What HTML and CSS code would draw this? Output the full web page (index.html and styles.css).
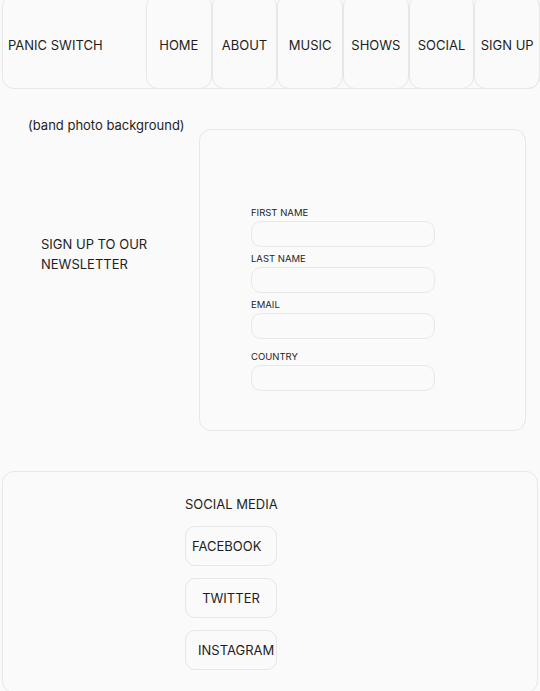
FILE: index.html
```html
<!DOCTYPE html>
<html>
<head>
<meta charset="utf-8">
<link rel="stylesheet" href="styles.css">
</head>
<body>
<div class="page">
  <header class="header">
    <div class="brand">PANIC SWITCH</div>
    <nav class="nav">
      <a class="nav-item">HOME</a>
      <a class="nav-item">ABOUT</a>
      <a class="nav-item">MUSIC</a>
      <a class="nav-item">SHOWS</a>
      <a class="nav-item">SOCIAL</a>
      <a class="nav-item">SIGN UP</a>
    </nav>
  </header>
  <section class="hero">
    <div class="hero-left">
      <div class="caption">(band photo background)</div>
      <div class="newsletter">SIGN UP TO OUR<br>NEWSLETTER</div>
    </div>
    <form class="card">
      <label class="field">
        <span class="label">FIRST NAME</span>
        <span class="input"></span>
      </label>
      <label class="field">
        <span class="label">LAST NAME</span>
        <span class="input"></span>
      </label>
      <label class="field">
        <span class="label">EMAIL</span>
        <span class="input"></span>
      </label>
      <label class="field field-gap">
        <span class="label">COUNTRY</span>
        <span class="input"></span>
      </label>
    </form>
  </section>
  <footer class="footer">
    <div class="social">
      <div class="social-title">SOCIAL MEDIA</div>
      <a class="social-btn social-fb">FACEBOOK</a>
      <a class="social-btn social-tw">TWITTER</a>
      <a class="social-btn social-ig">INSTAGRAM</a>
    </div>
  </footer>
</div>
</body>
</html>
```
FILE: styles.css
```css
* { box-sizing: border-box; }
html, body {
  margin: 0;
  background: #fafafa;
}
body {
  font-family: Inter, "Noto Sans", sans-serif;
  font-size: 13px;
  color: #1e1e1e;
  overflow: hidden;
}
.page {
  padding-left: 2px;
}
.header {
  display: flex;
  height: 95px;
  margin-top: -6px;
  border: 1px solid #e7e7e7;
  border-radius: 12px;
}
.brand {
  width: 143px;
  display: flex;
  align-items: center;
  padding-left: 5px;
  padding-top: 6px;
}
.nav {
  display: flex;
  flex: 1;
  margin: -1px -1px -1px 0;
}
.nav-item {
  flex: 1;
  border: 1px solid #e7e7e7;
  border-radius: 12px;
  display: flex;
  align-items: center;
  justify-content: center;
  padding-top: 6px;
  white-space: nowrap;
}
.hero {
  display: flex;
  align-items: flex-start;
  height: 382px;
  padding: 28px 14px 0 26px;
}
.hero-left {
  width: 171px;
}
.caption {
  line-height: 17px;
}
.newsletter {
  margin-top: 100px;
  padding-left: 13px;
  line-height: 20px;
}
.card {
  flex: 1;
  margin: 12px 0 0 0;
  height: 302px;
  border: 1px solid #e7e7e7;
  border-radius: 12px;
  padding: 77px 0 0 51px;
  display: flex;
  flex-direction: column;
}
.field {
  display: flex;
  flex-direction: column;
  margin-bottom: 6px;
}
.field-gap {
  margin-top: 6px;
}
.label {
  font-size: 9.5px;
  line-height: 12px;
  margin-bottom: 2px;
}
.input {
  width: 184px;
  height: 26px;
  border: 1px solid #e7e7e7;
  border-radius: 10px;
}
.footer {
  width: 536px;
  height: 222px;
  border: 1px solid #e7e7e7;
  border-radius: 12px;
  padding: 24px 0 0 182px;
}
.social {
  width: 92px;
  display: flex;
  flex-direction: column;
}
.social-title {
  line-height: 17px;
  margin-bottom: 13px;
  white-space: nowrap;
}
.social-btn {
  height: 40px;
  border: 1px solid #e7e7e7;
  border-radius: 10px;
  display: flex;
  align-items: center;
  justify-content: center;
  margin-bottom: 12px;
  white-space: nowrap;
}
.social-fb {
  justify-content: flex-start;
  padding-left: 6px;
}
.social-ig {
  justify-content: flex-start;
  padding-left: 12px;
}
```
